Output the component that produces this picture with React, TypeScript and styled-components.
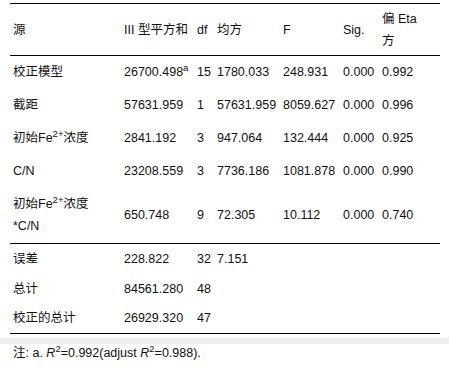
import React from "react";
import styled, { createGlobalStyle } from "styled-components";

const Global = createGlobalStyle`
  html, body { margin: 0; padding: 0; background: #fff; }
  body {
    font-family: "Liberation Sans", Arial, "Noto Sans CJK SC", sans-serif;
    font-size: 12.5px;
    color: #111;
  }
`;

const Page = styled.div`
  width: 449px;
  padding-top: 3px;
`;

const Table = styled.table`
  margin-left: 10px;
  width: 430px;
  border-collapse: collapse;
  table-layout: fixed;
  border-top: 1.5px solid #000;
  border-bottom: 1.5px solid #000;
`;

const Row = styled.tr<{ $h: number; $line?: boolean }>`
  height: ${(p) => p.$h}px;
  ${(p) => (p.$line ? "border-bottom: 1.5px solid #000;" : "")}
`;

const Cell = styled.td`
  padding: 0 0 0 3px;
  vertical-align: middle;
  line-height: 22px;
  white-space: nowrap;
  text-align: left;
`;

const Head = styled(Cell).attrs({ as: "th" })`
  font-weight: normal;
  white-space: normal;
`;

const Sup = styled.sup`
  font-size: 9.5px;
  vertical-align: 5px;
  line-height: 1;
  position: relative;
`;

const Band = styled.div`
  margin-top: 4px;
  height: 6px;
  background: #f0f0f0;
`;

const Note = styled.div`
  padding-left: 13px;
  line-height: 18px;
  font-size: 12.5px;
`;

const Ital = styled.i``;

const Fe = () => (
  <>
    初始Fe<Sup>2+</Sup>浓度
  </>
);

type R = [React.ReactNode, React.ReactNode, string, string, string, string, string];

const upper: { h: number; cells: R }[] = [
  { h: 33, cells: ["校正模型", <>26700.498<Sup>a</Sup></>, "15", "1780.033", "248.931", "0.000", "0.992"] },
  { h: 33, cells: ["截距", "57631.959", "1", "57631.959", "8059.627", "0.000", "0.996"] },
  { h: 33, cells: [<Fe />, "2841.192", "3", "947.064", "132.444", "0.000", "0.925"] },
  { h: 33, cells: ["C/N", "23208.559", "3", "7736.186", "1081.878", "0.000", "0.990"] },
  { h: 56, cells: [<><Fe /><br />*C/N</>, "650.748", "9", "72.305", "10.112", "0.000", "0.740"] },
];

const lower: { h: number; cells: R }[] = [
  { h: 30, cells: ["误差", "228.822", "32", "7.151", "", "", ""] },
  { h: 30, cells: ["总计", "84561.280", "48", "", "", "", ""] },
  { h: 30, cells: ["校正的总计", "26929.320", "47", "", "", "", ""] },
];

export default function App() {
  return (
    <Page>
      <Global />
      <Table>
        <colgroup>
          <col style={{ width: 111 }} />
          <col style={{ width: 73 }} />
          <col style={{ width: 20 }} />
          <col style={{ width: 66 }} />
          <col style={{ width: 60 }} />
          <col style={{ width: 39 }} />
          <col style={{ width: 61 }} />
        </colgroup>
        <thead>
          <Row $h={52} $line>
            <Head>源</Head>
            <Head>III 型平方和</Head>
            <Head>df</Head>
            <Head>均方</Head>
            <Head>F</Head>
            <Head>Sig.</Head>
            <Head>
              偏 Eta
              <br />
              方
            </Head>
          </Row>
        </thead>
        <tbody>
          {upper.map((r, i) => (
            <Row key={i} $h={r.h} $line={i === upper.length - 1}>
              {r.cells.map((c, j) => (
                <Cell key={j}>{c}</Cell>
              ))}
            </Row>
          ))}
          {lower.map((r, i) => (
            <Row key={"l" + i} $h={r.h}>
              {r.cells.map((c, j) => (
                <Cell key={j}>{c}</Cell>
              ))}
            </Row>
          ))}
        </tbody>
      </Table>
      <Band />
      <Note>
        注: a. <Ital>R</Ital>
        <Sup>2</Sup>=0.992(adjust <Ital>R</Ital>
        <Sup>2</Sup>=0.988).
      </Note>
    </Page>
  );
}
